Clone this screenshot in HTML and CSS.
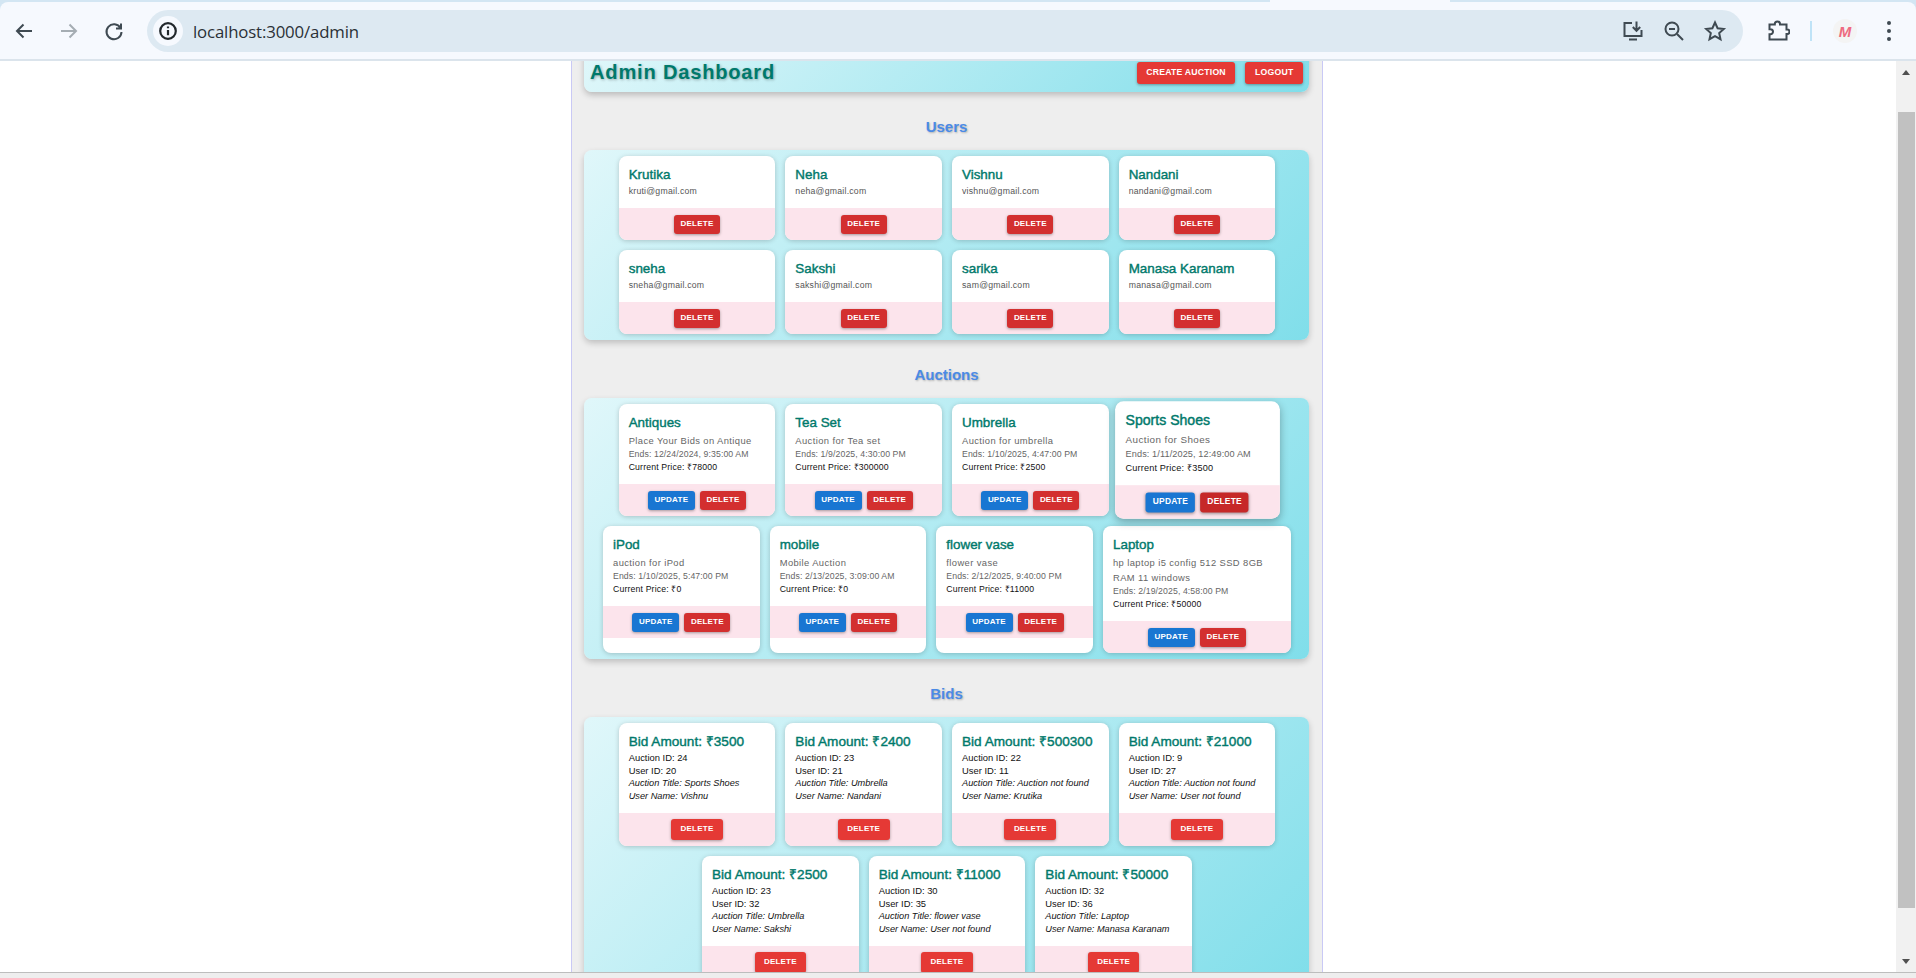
FILE: index.html
```html
<!DOCTYPE html>
<html lang="en">
<head>
<meta charset="utf-8">
<title>Admin Dashboard</title>
<link rel="stylesheet" href="styles.css">
</head>
<body>
<div class="tabstrip"></div>
<div class="toolbar">
  <div class="nav">
    <svg class="ico" viewBox="0 0 24 24"><path d="M20 12H5M11.5 5.5 5 12l6.500 6.500"/></svg>
    <svg class="ico dim" viewBox="0 0 24 24"><path d="M4 12h15M12.500 5.500 19 12l-6.500 6.500"/></svg>
    <svg class="ico" viewBox="0 0 24 24"><path d="M18.500 9A7.500 7.500 0 1 0 19.500 13M19 4.500V9.500H14"/></svg>
  </div>
  <div class="omnibox">
    <span class="info"><svg viewBox="0 0 24 24"><circle cx="12" cy="12" r="8.500"/><path d="M12 11v5.500M12 7.200v1.800"/></svg></span>
    <span class="url">localhost:3000/admin</span>
    <div class="omni-actions">
      <svg class="ico" viewBox="0 0 24 24"><path d="M11 4H3.500v13h17v-6M8 20.500h8M15.500 2.500v9M11.800 8l3.700 3.800L19.200 8"/></svg>
      <svg class="ico" viewBox="0 0 24 24"><circle cx="10" cy="10" r="6.500"/><path d="M7 10h6M15 15l6 6"/></svg>
      <svg class="ico" viewBox="0 0 24 24"><path d="M12 3.500l2.600 5.700 6.200.7-4.600 4.200 1.300 6.100L12 17.100l-5.500 3.100 1.300-6.100-4.600-4.200 6.200-.7z"/></svg>
    </div>
  </div>
  <svg class="ico ext" viewBox="0 0 24 24"><path d="M3.500 5.500h5.300V5a2.600 2.600 0 0 1 5.200 0v.5h6.500v5h.7a2 2 0 0 1 0 4.500h-.7v5.500H3.500v-5.200h1a2.500 2.500 0 0 0 0-5h-1z"/></svg>
  <span class="sep"></span>
  <span class="avatar">M</span>
  <span class="kebab"><i></i><i></i><i></i></span>
</div>
<div class="viewport">
  <div class="content">
    <main class="dash">
      <header class="topbar">
        <h1>Admin Dashboard</h1>
        <div class="topbar-actions">
          <button class="btn alt">Create Auction</button>
          <button class="btn alt">Logout</button>
        </div>
      </header>

      <h2>Users</h2>
      <section class="panel">
        <article class="card"><div class="body"><h3>Krutika</h3><p class="mail">kruti@gmail.com</p></div><div class="foot"><button class="btn del">Delete</button></div></article>
        <article class="card"><div class="body"><h3>Neha</h3><p class="mail">neha@gmail.com</p></div><div class="foot"><button class="btn del">Delete</button></div></article>
        <article class="card"><div class="body"><h3>Vishnu</h3><p class="mail">vishnu@gmail.com</p></div><div class="foot"><button class="btn del">Delete</button></div></article>
        <article class="card"><div class="body"><h3>Nandani</h3><p class="mail">nandani@gmail.com</p></div><div class="foot"><button class="btn del">Delete</button></div></article>
        <article class="card"><div class="body"><h3>sneha</h3><p class="mail">sneha@gmail.com</p></div><div class="foot"><button class="btn del">Delete</button></div></article>
        <article class="card"><div class="body"><h3>Sakshi</h3><p class="mail">sakshi@gmail.com</p></div><div class="foot"><button class="btn del">Delete</button></div></article>
        <article class="card"><div class="body"><h3>sarika</h3><p class="mail">sam@gmail.com</p></div><div class="foot"><button class="btn del">Delete</button></div></article>
        <article class="card"><div class="body"><h3>Manasa Karanam</h3><p class="mail">manasa@gmail.com</p></div><div class="foot"><button class="btn del">Delete</button></div></article>
      </section>

      <h2>Auctions</h2>
      <section class="panel">
        <article class="card auction"><div class="body"><h3>Antiques</h3><p class="desc">Place Your Bids on Antique</p><p class="ends">Ends: 12/24/2024, 9:35:00 AM</p><p class="price">Current Price: ₹78000</p></div><div class="foot"><button class="btn upd">Update</button><button class="btn del">Delete</button></div></article>
        <article class="card auction"><div class="body"><h3>Tea Set</h3><p class="desc">Auction for Tea set</p><p class="ends">Ends: 1/9/2025, 4:30:00 PM</p><p class="price">Current Price: ₹300000</p></div><div class="foot"><button class="btn upd">Update</button><button class="btn del">Delete</button></div></article>
        <article class="card auction"><div class="body"><h3>Umbrella</h3><p class="desc">Auction for umbrella</p><p class="ends">Ends: 1/10/2025, 4:47:00 PM</p><p class="price">Current Price: ₹2500</p></div><div class="foot"><button class="btn upd">Update</button><button class="btn del">Delete</button></div></article>
        <article class="card auction hovered"><div class="body"><h3>Sports Shoes</h3><p class="desc">Auction for Shoes</p><p class="ends">Ends: 1/11/2025, 12:49:00 AM</p><p class="price">Current Price: ₹3500</p></div><div class="foot"><button class="btn upd">Update</button><button class="btn del dark">Delete</button></div></article>
        <article class="card auction short"><div class="body"><h3>iPod</h3><p class="desc">auction for iPod</p><p class="ends">Ends: 1/10/2025, 5:47:00 PM</p><p class="price">Current Price: ₹0</p></div><div class="foot"><button class="btn upd">Update</button><button class="btn del">Delete</button></div></article>
        <article class="card auction short"><div class="body"><h3>mobile</h3><p class="desc">Mobile Auction</p><p class="ends">Ends: 2/13/2025, 3:09:00 AM</p><p class="price">Current Price: ₹0</p></div><div class="foot"><button class="btn upd">Update</button><button class="btn del">Delete</button></div></article>
        <article class="card auction short"><div class="body"><h3>flower vase</h3><p class="desc">flower vase</p><p class="ends">Ends: 2/12/2025, 9:40:00 PM</p><p class="price">Current Price: ₹11000</p></div><div class="foot"><button class="btn upd">Update</button><button class="btn del">Delete</button></div></article>
        <article class="card auction wide"><div class="body"><h3>Laptop</h3><p class="desc">hp laptop i5 config 512 SSD 8GB RAM 11 windows</p><p class="ends">Ends: 2/19/2025, 4:58:00 PM</p><p class="price">Current Price: ₹50000</p></div><div class="foot"><button class="btn upd">Update</button><button class="btn del">Delete</button></div></article>
      </section>

      <h2>Bids</h2>
      <section class="panel">
        <article class="card bid"><div class="body"><h3>Bid Amount: ₹3500</h3><p>Auction ID: 24</p><p>User ID: 20</p><p class="em">Auction Title: Sports Shoes</p><p class="em">User Name: Vishnu</p></div><div class="foot"><button class="btn alt">Delete</button></div></article>
        <article class="card bid"><div class="body"><h3>Bid Amount: ₹2400</h3><p>Auction ID: 23</p><p>User ID: 21</p><p class="em">Auction Title: Umbrella</p><p class="em">User Name: Nandani</p></div><div class="foot"><button class="btn alt">Delete</button></div></article>
        <article class="card bid"><div class="body"><h3>Bid Amount: ₹500300</h3><p>Auction ID: 22</p><p>User ID: 11</p><p class="em">Auction Title: Auction not found</p><p class="em">User Name: Krutika</p></div><div class="foot"><button class="btn alt">Delete</button></div></article>
        <article class="card bid"><div class="body"><h3>Bid Amount: ₹21000</h3><p>Auction ID: 9</p><p>User ID: 27</p><p class="em">Auction Title: Auction not found</p><p class="em">User Name: User not found</p></div><div class="foot"><button class="btn alt">Delete</button></div></article>
        <article class="card bid"><div class="body"><h3>Bid Amount: ₹2500</h3><p>Auction ID: 23</p><p>User ID: 32</p><p class="em">Auction Title: Umbrella</p><p class="em">User Name: Sakshi</p></div><div class="foot"><button class="btn alt">Delete</button></div></article>
        <article class="card bid"><div class="body"><h3>Bid Amount: ₹11000</h3><p>Auction ID: 30</p><p>User ID: 35</p><p class="em">Auction Title: flower vase</p><p class="em">User Name: User not found</p></div><div class="foot"><button class="btn alt">Delete</button></div></article>
        <article class="card bid"><div class="body"><h3>Bid Amount: ₹50000</h3><p>Auction ID: 32</p><p>User ID: 36</p><p class="em">Auction Title: Laptop</p><p class="em">User Name: Manasa Karanam</p></div><div class="foot"><button class="btn alt">Delete</button></div></article>
      </section>
    </main>
  </div>
  <div class="scrollbar">
    <span class="arrow up"></span>
    <span class="thumb"></span>
    <span class="arrow down"></span>
  </div>
</div>
<div class="bottomline"></div>
</body>
</html>
```
FILE: styles.css
```css
* { box-sizing: border-box; }
html, body { margin: 0; height: 100%; }
body {
  width: 1916px; height: 978px; overflow: hidden;
  display: flex; flex-direction: column;
  font-family: "Liberation Sans", Arial, sans-serif;
  background: #d3e6f3;
}
.tabstrip {
  height: 2px; flex: none;
  background: linear-gradient(90deg, #d3e6f3 0 1270px, #f6f9fe 1270px 1450px, #d3e6f3 1450px);
}
.toolbar {
  height: 59px; flex: none; display: flex; align-items: center;
  background: #f6f9fe; border-bottom: 2px solid #dbe4ec; border-radius: 8px 8px 0 0;
  padding: 1px 0 0 12px;
}
.ico { width: 24px; height: 24px; fill: none; stroke: #3f4a52; stroke-width: 2; flex: none; }
.ico.dim { stroke: #a5adb3; }
.nav { display: flex; gap: 21px; width: 135px; flex: none; }
.omnibox {
  width: 1596px; height: 42px; flex: none; border-radius: 21px; background: #dde9f2;
  display: flex; align-items: center; padding-left: 6px;
}
.info {
  width: 30px; height: 30px; border-radius: 15px; background: #f6f9fe;
  display: flex; align-items: center; justify-content: center;
}
.info svg { width: 22px; height: 22px; fill: none; stroke: #22282c; stroke-width: 2.4; }
.url { margin-left: 10px; font-family: "Open Sans", sans-serif; font-size: 16.800px; color: #2a3036; letter-spacing: -0.15px; }
.omni-actions { margin-left: auto; display: flex; gap: 17px; padding-right: 16px; }
.ext { margin-left: 23px; }
.sep { width: 2px; height: 20px; background: #bfe3f7; margin-left: 20px; flex: none; }
.avatar {
  width: 24px; height: 24px; border-radius: 50%; background: #f4f4f4; margin-left: 21px; flex: none;
  display: flex; align-items: center; justify-content: center;
  font-size: 15px; font-weight: 700; font-style: italic; color: #ee6a80;
}
.kebab { display: flex; flex-direction: column; gap: 4px; margin-left: 30px; }
.kebab i { width: 4px; height: 4px; border-radius: 50%; background: #3f4a52; display: block; }

.viewport { flex: 1; min-height: 0; display: flex; background: #fff; }
.content { flex: 1; min-width: 0; overflow: hidden; display: flex; justify-content: center; padding-right: 2px; }
.dash {
  width: 752px; height: 1200px; flex: none; background: #eee;
  border-left: 1px solid #c9c9f5; border-right: 1px solid #c9c9f5;
  padding: 0 13px 0 12px;
}
.topbar {
  margin-top: -8px; height: 39px; border-radius: 0 0 8px 8px;
  background: linear-gradient(135deg, #e0f7fa, #80deea);
  box-shadow: 0 3px 6px rgba(0,0,0,.22);
  display: flex; align-items: center; justify-content: space-between;
  padding: 0 6px;
}
h1 {
  margin: 0; font-size: 20.100px; font-weight: 700; letter-spacing: .8px;
  color: #00796b; text-shadow: 1px 1px 3px rgba(0,0,0,.3);
}
.topbar-actions { display: flex; gap: 10px; }
.btn {
  border: 0; border-radius: 3px; color: #fff; height: 19px; padding: 0 6.700px 2px;
  font-family: inherit; font-size: 8.040px; font-weight: 700; text-transform: uppercase;
  letter-spacing: .2px; box-shadow: 0 1px 3px rgba(0,0,0,.35); white-space: nowrap;
}
.del { background: #d32f2f; }
.del.dark { background: #c62828; }
.upd { background: #1976d2; }
.alt { background: #e53935; height: 21px; padding: 0 9.400px 2px; }
.topbar-actions .btn { height: 22px; font-size: 8.700px; padding: 0 9.600px 2px; }
h2 {
  margin: 26px 0 15px; line-height: 17px; text-align: center; font-size: 15px; font-weight: 700;
  color: #4a8ae6; text-shadow: 1px 1px 2px rgba(0,0,0,.25);
}
.panel {
  display: flex; flex-wrap: wrap; justify-content: center; gap: 10px; padding: 6px 6px 6px 7px;
  border-radius: 8px; background: linear-gradient(135deg, #e0f7fa, #80deea);
  box-shadow: 0 3px 6px rgba(0,0,0,.2);
}
.card {
  width: 156.670px; background: #fff; border-radius: 8px; overflow: hidden;
  box-shadow: 0 1px 5px rgba(0,0,0,.2);
  display: flex; flex-direction: column;
}
.body { padding: 10px 10px 0; height: 52px; }
h3 { margin: 0; font-size: 13.400px; line-height: 18px; font-weight: 400; color: #00796b; -webkit-text-stroke: .4px #00796b; }
p { margin: 0; }
.foot { height: 32px; background: #fce4ec; display: flex; justify-content: center; gap: 5px; padding-top: 7px; }
.mail { font-size: 8.710px; line-height: 15px; color: #555; letter-spacing: .23px; }
.auction .body { height: 80px; }
.auction h3 { margin-bottom: 2px; }
.short { height: 127px; }
.wide { width: 188px; }
.wide .body { height: 95px; }
.desc { font-size: 9.380px; line-height: 15px; color: #666; margin-bottom: -1px; letter-spacing: .4px; }
.ends { font-size: 8.710px; line-height: 13px; color: #666; letter-spacing: .1px; }
.price { font-size: 8.710px; line-height: 13px; color: #111; letter-spacing: .15px; }
.hovered { transform: scale(1.05); box-shadow: 0 3px 8px rgba(0,0,0,.3); z-index: 1; }
.bid .body { height: 90px; }
.bid .foot { height: 33px; padding-top: 6px; }
.bid p { font-size: 9.380px; line-height: 12.500px; color: #111; }
.bid p.em { font-style: italic; font-size: 9.200px; }
.bid h3 { font-size: 13.600px; margin-bottom: 1px; }

.scrollbar {
  width: 20px; flex: none; background: #f1f1f1; position: relative;
  display: flex; flex-direction: column; align-items: center; padding: 9px 0 8px 0;
}
.arrow { width: 0; height: 0; border-left: 4.500px solid transparent; border-right: 4.500px solid transparent; }
.arrow.up { border-bottom: 5px solid #505050; }
.arrow.down { border-top: 5px solid #505050; margin-top: auto; }
.thumb { width: 17px; height: 796px; background: #c1c1c1; margin-top: 37px; }
.bottomline { height: 6px; flex: none; background: #eee; border-top: 1px solid #bdbdbd; }
```
